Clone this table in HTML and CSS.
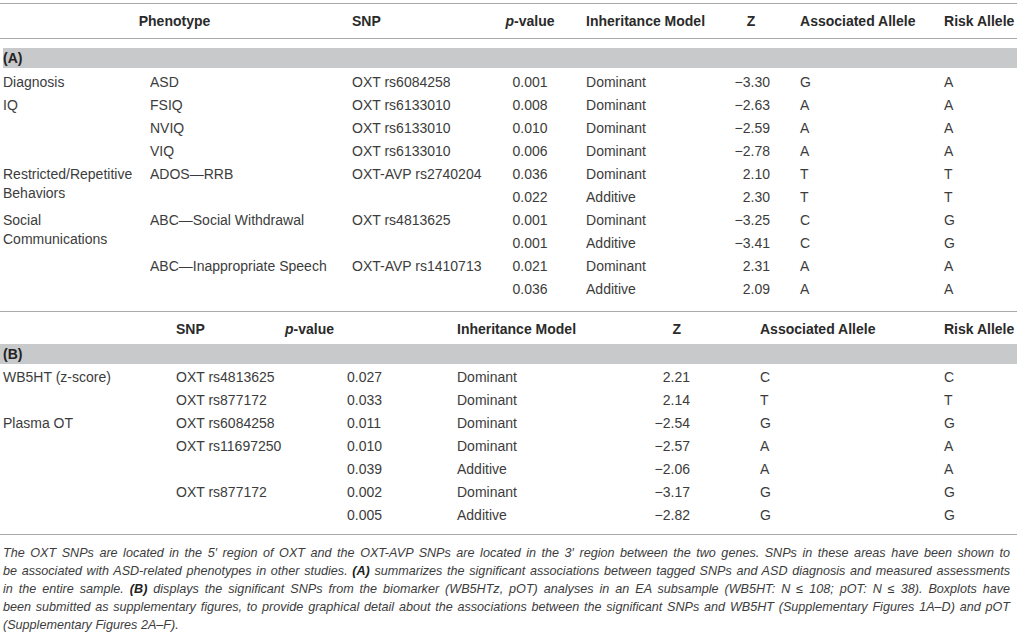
FILE: index.html
```html
<!DOCTYPE html>
<html lang="en">
<head>
    <meta charset="UTF-8">
    <meta name="viewport" content="width=device-width, initial-scale=1.0">
    <title>Table 3 - OXT SNP associations</title>
    <link rel="stylesheet" href="styles.css">
</head>
<body>

<table class="assoc table-a">
    <colgroup>
        <col class="a1"><col class="a2"><col class="a3"><col class="a4">
        <col class="a5"><col class="a6"><col class="a7"><col class="a8">
    </colgroup>
    <thead>
        <tr>
            <th colspan="2" class="center">Phenotype</th>
            <th>SNP</th>
            <th class="center"><i>p</i>-value</th>
            <th class="pad-inh">Inheritance Model</th>
            <th class="z-head">Z</th>
            <th class="pad-assoc">Associated Allele</th>
            <th>Risk Allele</th>
        </tr>
    </thead>
    <tbody>
        <tr class="section"><td colspan="8">(A)</td></tr>
        <tr class="first">
            <td>Diagnosis</td><td>ASD</td><td>OXT rs6084258</td><td class="center">0.001</td>
            <td class="pad-inh">Dominant</td><td class="num">&minus;3.30</td><td class="pad-assoc">G</td><td>A</td>
        </tr>
        <tr>
            <td rowspan="3">IQ</td><td>FSIQ</td><td>OXT rs6133010</td><td class="center">0.008</td>
            <td class="pad-inh">Dominant</td><td class="num">&minus;2.63</td><td class="pad-assoc">A</td><td>A</td>
        </tr>
        <tr>
            <td>NVIQ</td><td>OXT rs6133010</td><td class="center">0.010</td>
            <td class="pad-inh">Dominant</td><td class="num">&minus;2.59</td><td class="pad-assoc">A</td><td>A</td>
        </tr>
        <tr>
            <td>VIQ</td><td>OXT rs6133010</td><td class="center">0.006</td>
            <td class="pad-inh">Dominant</td><td class="num">&minus;2.78</td><td class="pad-assoc">A</td><td>A</td>
        </tr>
        <tr>
            <td rowspan="2">Restricted/Repetitive<br>Behaviors</td><td rowspan="2">ADOS&mdash;RRB</td><td rowspan="2">OXT-AVP rs2740204</td><td class="center">0.036</td>
            <td class="pad-inh">Dominant</td><td class="num">2.10</td><td class="pad-assoc">T</td><td>T</td>
        </tr>
        <tr>
            <td class="center">0.022</td>
            <td class="pad-inh">Additive</td><td class="num">2.30</td><td class="pad-assoc">T</td><td>T</td>
        </tr>
        <tr>
            <td rowspan="4">Social<br>Communications</td><td rowspan="2">ABC&mdash;Social Withdrawal</td><td rowspan="2">OXT rs4813625</td><td class="center">0.001</td>
            <td class="pad-inh">Dominant</td><td class="num">&minus;3.25</td><td class="pad-assoc">C</td><td>G</td>
        </tr>
        <tr>
            <td class="center">0.001</td>
            <td class="pad-inh">Additive</td><td class="num">&minus;3.41</td><td class="pad-assoc">C</td><td>G</td>
        </tr>
        <tr>
            <td rowspan="2">ABC&mdash;Inappropriate Speech</td><td rowspan="2">OXT-AVP rs1410713</td><td class="center">0.021</td>
            <td class="pad-inh">Dominant</td><td class="num">2.31</td><td class="pad-assoc">A</td><td>A</td>
        </tr>
        <tr>
            <td class="center">0.036</td>
            <td class="pad-inh">Additive</td><td class="num">2.09</td><td class="pad-assoc">A</td><td>A</td>
        </tr>
    </tbody>
</table>

<table class="assoc table-b">
    <colgroup>
        <col class="b1"><col class="b2"><col class="b3"><col class="b4">
        <col class="b5"><col class="b6"><col class="b7">
    </colgroup>
    <thead>
        <tr>
            <th></th>
            <th>SNP</th>
            <th><i>p</i>-value</th>
            <th>Inheritance Model</th>
            <th class="z-head-b">Z</th>
            <th class="pad-assoc-b">Associated Allele</th>
            <th>Risk Allele</th>
        </tr>
    </thead>
    <tbody>
        <tr class="section"><td colspan="7">(B)</td></tr>
        <tr>
            <td rowspan="2">WB5HT (z-score)</td><td>OXT rs4813625</td><td class="pad-p">0.027</td>
            <td>Dominant</td><td class="num">2.21</td><td class="pad-assoc-b">C</td><td>C</td>
        </tr>
        <tr>
            <td>OXT rs877172</td><td class="pad-p">0.033</td>
            <td>Dominant</td><td class="num">2.14</td><td class="pad-assoc-b">T</td><td>T</td>
        </tr>
        <tr>
            <td rowspan="5">Plasma OT</td><td>OXT rs6084258</td><td class="pad-p">0.011</td>
            <td>Dominant</td><td class="num">&minus;2.54</td><td class="pad-assoc-b">G</td><td>G</td>
        </tr>
        <tr>
            <td rowspan="2">OXT rs11697250</td><td class="pad-p">0.010</td>
            <td>Dominant</td><td class="num">&minus;2.57</td><td class="pad-assoc-b">A</td><td>A</td>
        </tr>
        <tr>
            <td class="pad-p">0.039</td>
            <td>Additive</td><td class="num">&minus;2.06</td><td class="pad-assoc-b">A</td><td>A</td>
        </tr>
        <tr>
            <td rowspan="2">OXT rs877172</td><td class="pad-p">0.002</td>
            <td>Dominant</td><td class="num">&minus;3.17</td><td class="pad-assoc-b">G</td><td>G</td>
        </tr>
        <tr class="last">
            <td class="pad-p">0.005</td>
            <td>Additive</td><td class="num">&minus;2.82</td><td class="pad-assoc-b">G</td><td>G</td>
        </tr>
    </tbody>
</table>

<p class="caption">
    <span class="line">The OXT SNPs are located in the 5&prime; region of OXT and the OXT-AVP SNPs are located in the 3&prime; region between the two genes. SNPs in these areas have been shown to</span>
    <span class="line">be associated with ASD-related phenotypes in other studies. <b>(A)</b> summarizes the significant associations between tagged SNPs and ASD diagnosis and measured assessments</span>
    <span class="line">in the entire sample. <b>(B)</b> displays the significant SNPs from the biomarker (WB5HTz, pOT) analyses in an EA subsample (WB5HT: N &le; 108; pOT: N &le; 38). Boxplots have</span>
    <span class="line">been submitted as supplementary figures, to provide graphical detail about the associations between the significant SNPs and WB5HT (Supplementary Figures 1A&ndash;D) and pOT</span>
    <span class="line end">(Supplementary Figures 2A&ndash;F).</span>
</p>

</body>
</html>
```

FILE: styles.css
```css
body {
    margin: 0;
    padding: 0;
    background: #fff;
    color: #3c3c3c;
    font-family: "Liberation Sans", Arial, sans-serif;
    font-size: 14px;
}
.assoc {
    width: 1017px;
    table-layout: fixed;
    border-collapse: separate;
    border-spacing: 0;
    border-top: 1px solid #a9a9a9;
}
.table-a {
    margin-top: 3px;
}
.table-b {
    margin-top: 12px;
    border-bottom: 1px solid #a9a9a9;
}
.assoc th,
.assoc td {
    padding: 4px 0 0 3px;
    line-height: 19px;
    text-align: left;
    vertical-align: top;
    white-space: nowrap;
}
.assoc th {
    font-weight: bold;
    color: #2a2a2a;
    vertical-align: middle;
}
.table-a thead th {
    height: 34px;
    padding-top: 0;
    border-bottom: 1px solid #a9a9a9;
}
.table-b thead th {
    height: 30px;
    padding-top: 2px;
}
.section td {
    padding: 0 0 0 3px;
    height: 20px;
    line-height: 20px;
    font-weight: bold;
    color: #222;
    background: #c8c9ca;
}
.table-a .section td {
    padding-top: 9px;
    background-clip: content-box;
}
.first td {
    padding-top: 5px;
}
.table-b .last td {
    padding-bottom: 9px;
}

/* column widths, part A */
.a1 { width: 147px; }
.a2 { width: 202px; }
.a3 { width: 149px; }
.a4 { width: 64px; }
.a5 { width: 158px; }
.a6 { width: 52px; }
.a7 { width: 169px; }
.a8 { width: 76px; }

/* column widths, part B */
.b1 { width: 173px; }
.b2 { width: 109px; }
.b3 { width: 172px; }
.b4 { width: 166px; }
.b5 { width: 72px; }
.b6 { width: 249px; }
.b7 { width: 76px; }

.assoc .center {
    text-align: center;
    padding-left: 0;
}
.assoc .num {
    text-align: right;
    padding-left: 0;
    padding-right: 2px;
}
.assoc .pad-inh { padding-left: 24px; }
.assoc .pad-assoc { padding-left: 28px; }
.assoc .pad-assoc-b { padding-left: 68px; }
.assoc .pad-p { padding-left: 65px; }
.assoc .z-head {
    text-align: center;
    padding-left: 10px;
}
.assoc .z-head-b {
    text-align: right;
    padding-right: 11px;
}
.caption {
    margin: 9px 0 0 0;
    padding: 0 7px 0 3px;
    font-size: 12.6px;
    font-style: italic;
    line-height: 18px;
    color: #3c3c3c;
}
.caption .line {
    display: block;
    white-space: nowrap;
    text-align: justify;
    text-align-last: justify;
}
.caption .line.end {
    text-align-last: left;
}
.caption b {
    color: #222;
}
```
